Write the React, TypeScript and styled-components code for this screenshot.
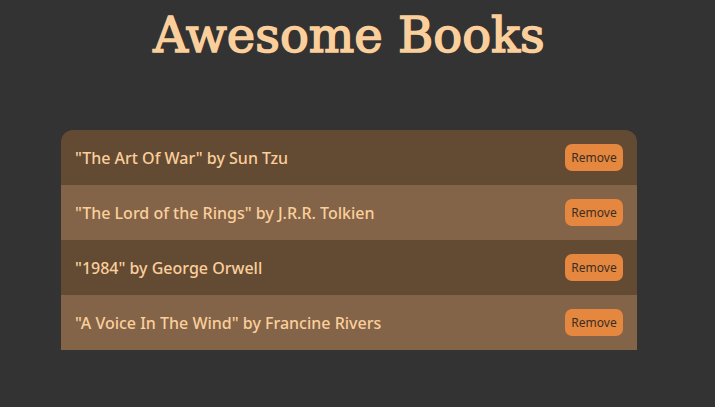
import React, { useState } from 'react';
import styled, { createGlobalStyle } from 'styled-components';

const GlobalStyle = createGlobalStyle`
  html, body {
    margin: 0;
    padding: 0;
    background-color: #333;
  }
  body {
    font-family: 'Noto Sans', 'Open Sans', sans-serif;
  }
`;

const Page = styled.main`
  box-sizing: border-box;
  width: calc(100% - 17px);
  min-height: 407px;
  display: flex;
  flex-direction: column;
  align-items: center;
`;

const Title = styled.h1`
  margin: 5px 0 0;
  font-family: 'DejaVu Serif', 'Liberation Serif', serif;
  font-weight: 400;
  font-size: 48px;
  line-height: 60px;
  color: #fbcf9b;
  -webkit-text-stroke: 1.6px #fbcf9b;
`;

const List = styled.ul`
  list-style: none;
  margin: 65px 0 0;
  padding: 0;
  width: 576px;
  border-radius: 12px 12px 0 0;
  overflow: hidden;
`;

const Row = styled.li<{ $alt: boolean }>`
  height: 55px;
  box-sizing: border-box;
  padding: 0 14px;
  display: flex;
  align-items: center;
  justify-content: space-between;
  background-color: ${p => (p.$alt ? '#836448' : '#634a33')};
`;

const BookText = styled.span`
  font-size: 16px;
  font-weight: 500;
  color: #fbcf9b;
`;

const RemoveButton = styled.button`
  width: 58px;
  height: 27px;
  padding: 0;
  border: none;
  border-radius: 7px;
  background-color: #e5873e;
  color: #3a2e24;
  font-family: 'Noto Sans', sans-serif;
  font-size: 12px;
  cursor: pointer;
`;

const initialBooks = [
  { title: 'The Art Of War', author: 'Sun Tzu' },
  { title: 'The Lord of the Rings', author: 'J.R.R. Tolkien' },
  { title: '1984', author: 'George Orwell' },
  { title: 'A Voice In The Wind', author: 'Francine Rivers' },
];

export default function App() {
  const [books, setBooks] = useState(initialBooks);

  return (
    <>
      <GlobalStyle />
      <Page>
        <Title>Awesome Books</Title>
        <List>
          {books.map((book, i) => (
            <Row key={book.title} $alt={i % 2 === 1}>
              <BookText>
                "{book.title}" by {book.author}
              </BookText>
              <RemoveButton onClick={() => setBooks(books.filter(b => b !== book))}>
                Remove
              </RemoveButton>
            </Row>
          ))}
        </List>
      </Page>
    </>
  );
}
